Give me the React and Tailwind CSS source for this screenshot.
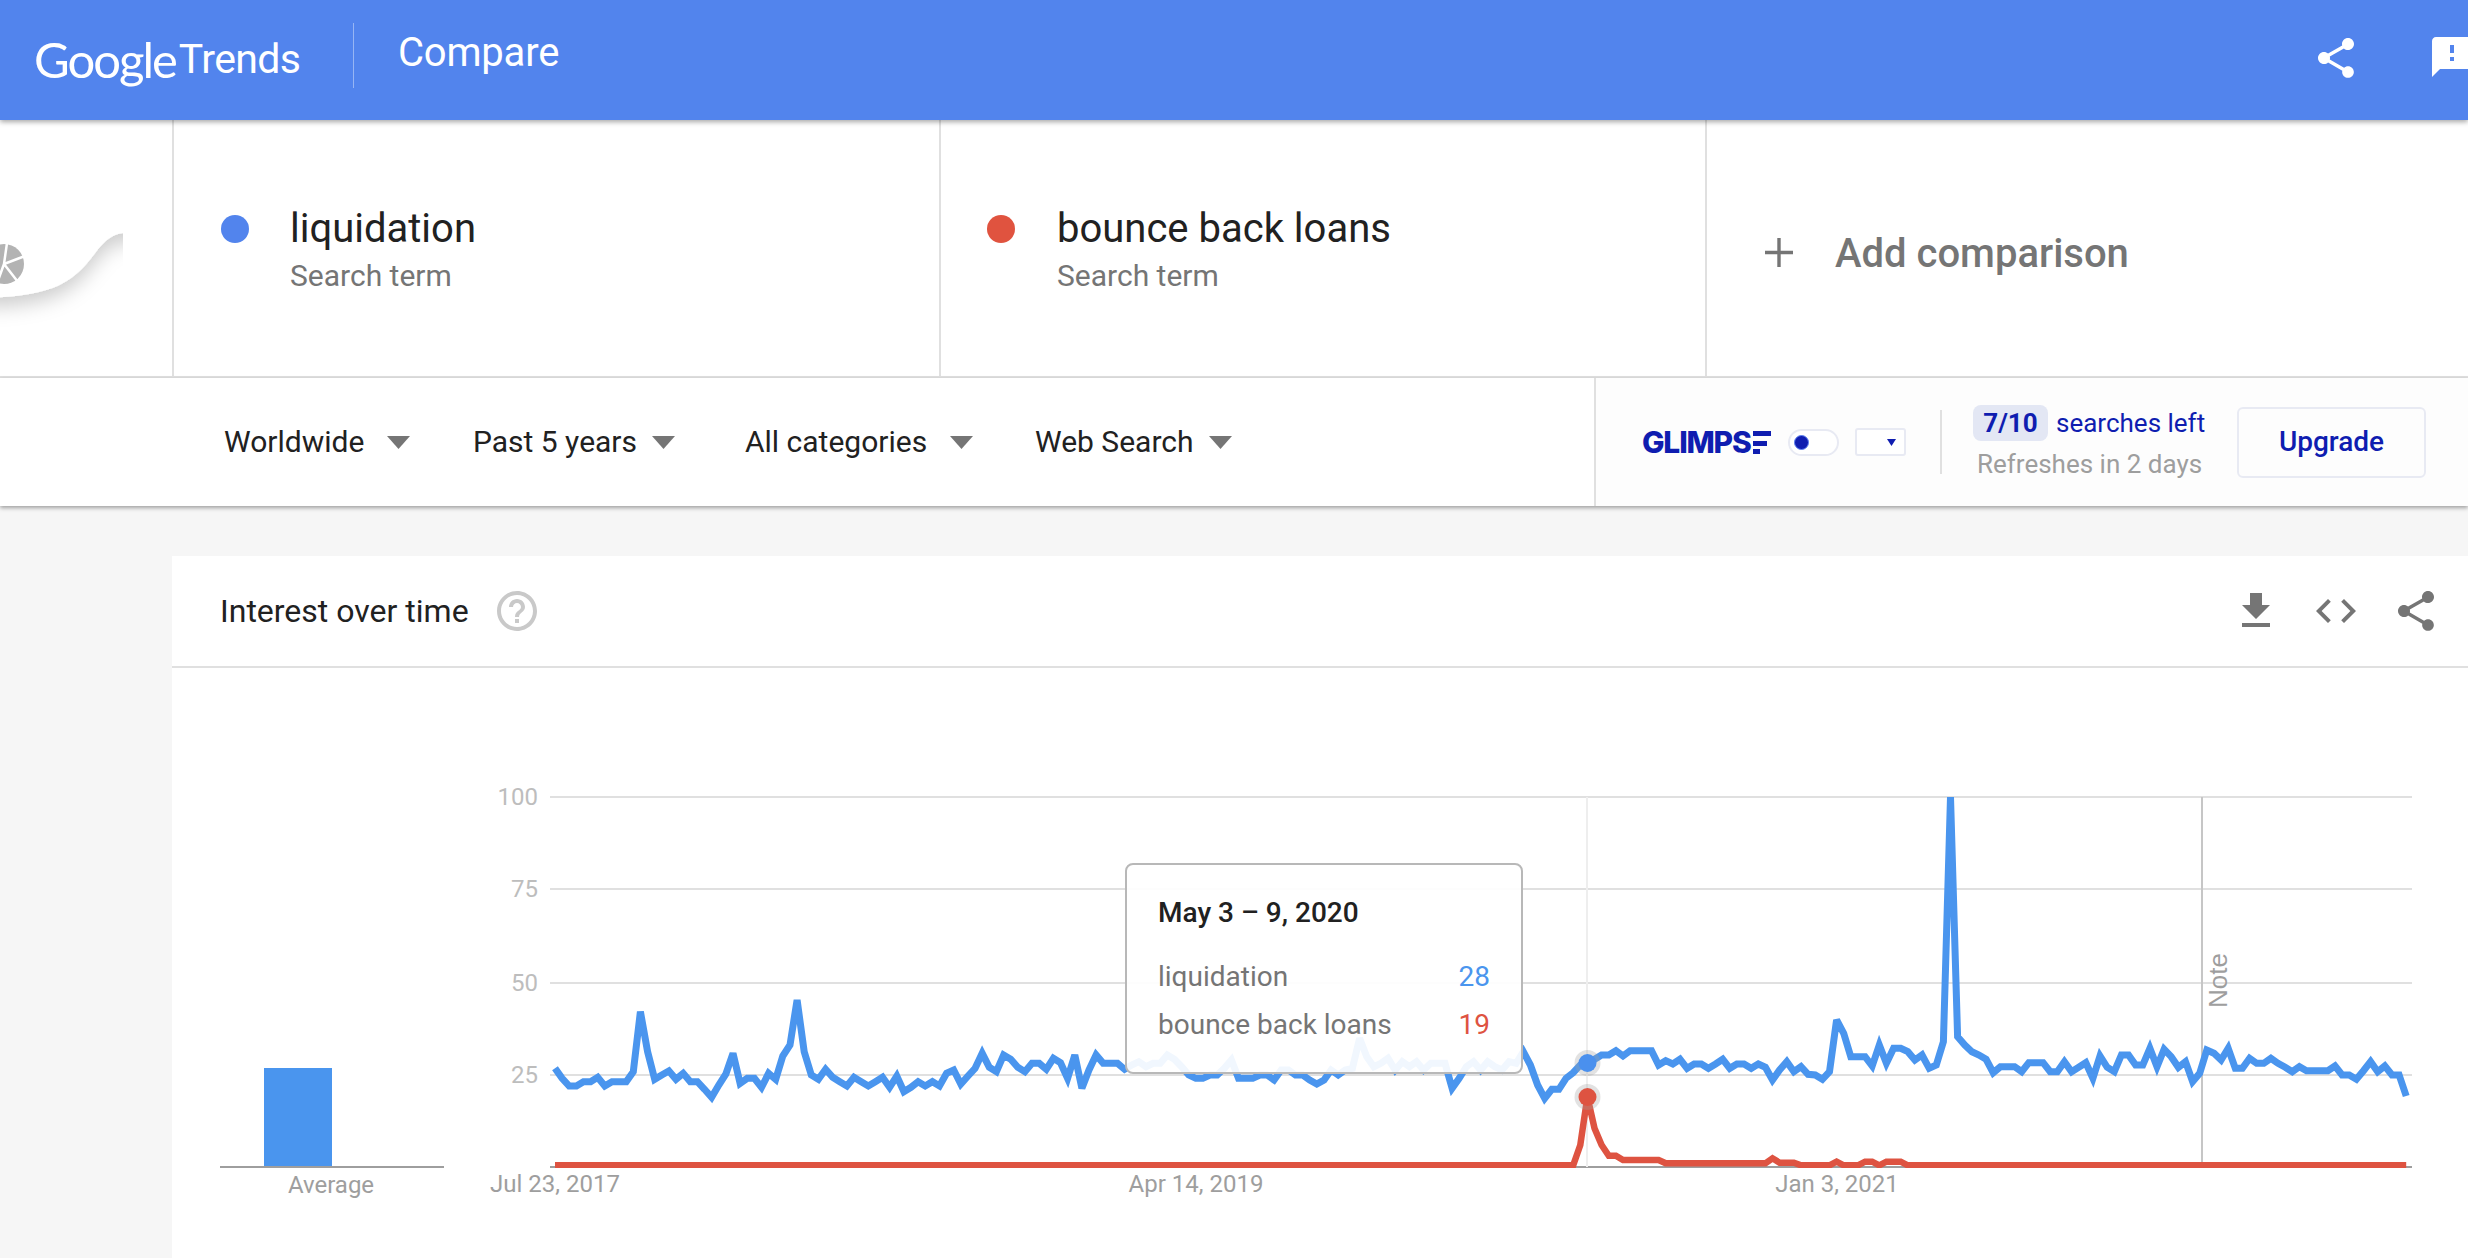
const A = [235,265,288,288,275,275,262,288,275,275,275,245,65,185,268,255,243,268,250,275,275,298,322,285,252,190,280,265,265,292,250,268,198,165,30,185,255,268,238,262,275,288,262,275,288,275,262,292,258,305,292,275,288,275,288,250,240,282,258,235,190,232,245,195,208,232,245];
const B = [130,130,148,115,128,175,105,205,150,105,130,130,130,148,135,125,140,130,130,105,118,140,165,175,175,165,165,145,120,175,175,175,165,165,180,150,150,165,165,180,192,180,150,165,150,145,55,110,140,130,115,150,125,140,125,150,130,130,130,205,175,140,125,150,125,140,150,125];
const C = [160,125,165,225,265,238,238,205,188,165,158,148,135,135,122,138,122,122,122,122,165,152,162,148,175,162,162,175,162,148,175,162,162,175,162,172,210,180,155,185,170,193,195,208,185,30,70,140,140,140,168,105,160,115,115,125,150,135,175,165,95,-639,80];
const D = [105,125,135,148,188,170,170,170,185,158,158,158,185,185,155,185,172,158,205,138,172,185,135,135,165,165,115,170,118,140,172,155,215,190,120,130,150,115,175,175,145,160,160,145,160,172,185,170,182,182,182,182,168,195,195,208,182,155,185,168,195,195,258];
const blueY = [...A.map((y) => 990 + y / 3), ...B.map((y) => 1020 + y / 3), ...C.map((y) => 1010 + y / 3), ...D.map((y) => 1010 + y / 3)];
const X = (k) => 555 + 7.12 * k;
const bluePts = blueY.map((y, k) => `${X(k).toFixed(1)},${y.toFixed(1)}`).join(" ");
const redTail = { 143: 466, 144: 405, 145: 260, 146: 355, 147: 405, 148: 437, 149: 437, 150: 450, 151: 450, 152: 450, 153: 450, 154: 450, 155: 450, 171: 445, 172: 458, 173: 458, 174: 458, 180: 455, 184: 455, 185: 455, 187: 455, 188: 455, 189: 455 };
const redPts = Array.from({ length: 261 }, (_, k) => {
  let z = 466;
  if (redTail[k] !== undefined) z = redTail[k];
  else if (k >= 156 && k <= 170) z = 460;
  return `${X(k).toFixed(1)},${(1010 + z / 3).toFixed(1)}`;
}).join(" ");

const SHARE = "M18 16.08c-.76 0-1.44.3-1.96.77L8.91 12.7c.05-.23.09-.46.09-.7s-.04-.47-.09-.7l7.05-4.11c.54.5 1.25.81 2.04.81 1.66 0 3-1.34 3-3s-1.34-3-3-3-3 1.34-3 3c0 .24.04.47.09.7L8.04 9.81C7.5 9.31 6.79 9 6 9c-1.66 0-3 1.34-3 3s1.34 3 3 3c.79 0 1.5-.31 2.04-.81l7.12 4.16c-.05.21-.08.43-.08.65 0 1.61 1.31 2.92 2.92 2.92 1.61 0 2.92-1.31 2.92-2.92s-1.31-2.92-2.92-2.92z";

function Mat({ d, className }) {
  return (
    <svg viewBox="0 0 24 24" className={"w-12 h-12 shrink-0 " + className} fill="currentColor">
      <path d={d} />
    </svg>
  );
}

function Tri({ className }) {
  return (
    <svg width="23" height="13" viewBox="0 0 23 13" className={"shrink-0 " + className}>
      <path d="M0 0h23L11.5 13z" fill="#757575" />
    </svg>
  );
}

function Term({ color, name, width, pad, gap }) {
  return (
    <div className={"h-full border-r-2 border-[#e0e0e0] pt-[85px] flex items-start shrink-0 " + width + " " + pad}>
      <div className="h-12 flex items-center">
        <div className={"w-7 h-7 rounded-full " + color} />
      </div>
      <div className={gap}>
        <div className="text-[40px] leading-[48px] text-[#212121]">{name}</div>
        <div className="text-[30px] leading-[36px] mt-[5px] text-[#757575]">Search term</div>
      </div>
    </div>
  );
}

export default function App() {
  return (
    <div className="w-[2468px] h-[1258px] overflow-hidden bg-[#f6f6f6] flex flex-col font-['Roboto',sans-serif]">
      <header className="h-[120px] shrink-0 bg-[#5284ed] relative z-20 flex items-start text-white shadow-[0_2px_5px_rgba(0,0,0,0.35)]">
        <div className="w-[353px] h-full pl-[34px] pt-[30px] flex items-start shrink-0 whitespace-nowrap">
          <span className="font-['Lato',sans-serif] text-[49px] leading-[58px] tracking-[-2px]">Google</span>
          <span className="text-[41px] leading-[58px] tracking-[-0.6px] ml-[3px]">Trends</span>
        </div>
        <div className="w-px h-[65px] mt-[23px] bg-white/40 shrink-0" />
        <div className="ml-[44px] mt-[29px] text-[40px] leading-[48px] font-normal tracking-[-0.2px]">Compare</div>
        <div className="ml-auto mr-[-8px] mt-[33px] flex items-start gap-[68px]">
          <Mat d={SHARE} className="mt-px" />
          <Mat d="M20 2H4c-1.1 0-1.99.9-1.99 2L2 22l4-4h14c1.1 0 2-.9 2-2V4c0-1.1-.9-2-2-2zm-7 12h-2v-2h2v2zm0-4h-2V6h2v4z" className="" />
        </div>
      </header>

      <section className="h-[258px] shrink-0 bg-white border-b-2 border-[#e0e0e0] flex">
        <div className="w-[174px] h-full shrink-0 border-r-2 border-[#e0e0e0]">
          <svg width="172" height="256" viewBox="0 120 172 256">
            <defs>
              <filter id="sw" x="-30%" y="-30%" width="160%" height="160%">
                <feDropShadow dx="0" dy="9" stdDeviation="10" floodColor="#000" floodOpacity="0.2" />
              </filter>
              <clipPath id="swc"><rect x="0" y="120" width="123" height="256" /></clipPath>
            </defs>
            <g clipPath="url(#swc)">
              <path d="M200 100V233H123C100 236 95 260 75 275C55 292 25 297 -20 298V100Z" fill="#fff" filter="url(#sw)" />
            </g>
            <circle cx="4" cy="264" r="20" fill="#b3b3b3" />
            <path d="M4 264L7 243M4 264L25 256M4 264L18 282M4 264L-4 286" stroke="#fff" strokeWidth="2.5" />
          </svg>
        </div>
        <Term color="bg-[#5284ed]" name="liquidation" width="w-[767px]" pad="pl-[47px]" gap="ml-[41px]" />
        <Term color="bg-[#e0533f]" name="bounce back loans" width="w-[766px]" pad="pl-[46px]" gap="ml-[42px]" />
        <div className="flex-1 flex items-center pl-[58px] pt-[8px] whitespace-nowrap">
          <svg width="28" height="29" viewBox="0 0 28 29" className="shrink-0">
            <path d="M12.3 0h3.4v12.8H28v3.4H15.7V29h-3.4V16.2H0v-3.4h12.300z" fill="#757575" />
          </svg>
          <span className="ml-[42px] mt-[4px] text-[40px] leading-[48px] font-medium text-[#757575]">Add comparison</span>
        </div>
      </section>

      <section className="h-[128px] shrink-0 bg-white relative z-10 flex shadow-[0_2px_4px_rgba(0,0,0,0.35)]">
        <div className="w-[1594px] shrink-0 flex items-center pl-[224px] text-[30px] leading-[36px] text-[#212121] whitespace-nowrap">
          <span className="w-[139px] shrink-0">Worldwide</span>
          <Tri className="ml-[24px]" />
          <span className="ml-[63px] w-[163px] shrink-0">Past 5 years</span>
          <Tri className="ml-[16px]" />
          <span className="ml-[70px] w-[181px] shrink-0">All categories</span>
          <Tri className="ml-[24px]" />
          <span className="ml-[62px] w-[158px] shrink-0">Web Search</span>
          <Tri className="ml-[16px]" />
        </div>
        <div className="flex-1 border-l-2 border-[#e0e0e0] bg-[#fdfdfd] flex items-center pl-[46px]">
          <div className="w-[129px] shrink-0 flex items-center">
            <span className="font-['Inter',sans-serif] font-extrabold text-[#0f1db0] text-[30px] leading-[32px] tracking-[-1.2px]">GLIMPS</span>
            <svg width="18" height="23" viewBox="0 0 18 23" className="ml-auto shrink-0">
              <path d="M0 0h18v5H0zM0 10h14v5H0zM0 18h7v5H0z" fill="#0f1db0" />
            </svg>
          </div>
          <div className="ml-[17px] w-[51px] h-[27px] rounded-full border-2 border-[#e8eaf3] bg-white flex items-center pl-[4px] shrink-0">
            <div className="w-[15px] h-[15px] rounded-full bg-[#0f1db0] border border-[#5b7ff0]" />
          </div>
          <div className="ml-[16px] w-[51px] h-[28px] rounded-[3px] border-2 border-[#e8eaf3] bg-white flex items-center justify-end pr-[8px] shrink-0">
            <svg width="9" height="7" viewBox="0 0 9 7"><path d="M0 0h9L4.500 7z" fill="#0f1db0" /></svg>
          </div>
          <div className="ml-[34px] w-[2px] h-[64px] bg-[#e0e0e0] shrink-0" />
          <div className="ml-[31px] w-[264px] shrink-0">
            <div className="flex items-center text-[26px] text-[#0f1db0]">
              <span className="w-[75px] h-[36px] rounded-[8px] bg-[#e3e7f4] font-bold flex items-center justify-center leading-[36px]">7/10</span>
              <span className="ml-[8px] leading-[36px]">searches left</span>
            </div>
            <div className="mt-[8px] ml-[4px] text-[26px] leading-[30px] text-[#9e9e9e]">Refreshes in 2 days</div>
          </div>
          <div className="w-[189px] h-[71px] rounded-[6px] border-2 border-[#e8eaf3] flex items-center justify-center text-[28px] font-medium text-[#0f1db0] shrink-0">Upgrade</div>
        </div>
      </section>

      <section className="flex-1 ml-[172px] mt-[50px] bg-white flex flex-col min-h-0">
        <div className="h-[112px] shrink-0 border-b-2 border-[#e0e0e0] flex items-center pl-[48px] pr-[28px]">
          <span className="text-[32px] leading-[36px] text-[#212121]">Interest over time</span>
          <Mat d="M11 18h2v-2h-2v2zm1-16C6.480 2 2 6.480 2 12s4.480 10 10 10 10-4.480 10-10S17.520 2 12 2zm0 18c-4.410 0-8-3.590-8-8s3.590-8 8-8 8 3.590 8 8-3.590 8-8 8zm0-14c-2.210 0-4 1.790-4 4h2c0-1.100.9-2 2-2s2 .9 2 2c0 2-3 1.750-3 5h2c0-2.250 3-2.500 3-5 0-2.210-1.790-4-4-4z" className="ml-[24px] text-[#c9c9c9]" />
          <div className="ml-auto flex gap-8 text-[#757575]">
            <Mat d="M19 9h-4V3H9v6H5l7 7 7-7zM5 18v2h14v-2H5z" />
            <Mat d="M9.400 16.600L4.800 12l4.600-4.600L8 6l-6 6 6 6 1.400-1.400zm5.200 0l4.600-4.600-4.600-4.600L16 6l6 6-6 6-1.400-1.400z" />
            <Mat d={SHARE} />
          </div>
        </div>
        <div className="flex-1 relative min-h-0">
          <svg width="2296" height="590" viewBox="172 668 2296 590" className="block font-['Roboto',sans-serif]">
            <defs>
              <clipPath id="plot"><rect x="550" y="796" width="1862" height="372" /></clipPath>
            </defs>
            {[797, 889, 983, 1075].map((y) => (
              <rect key={y} x="550" y={y - 1} width="1862" height="2" fill="#e0e0e0" />
            ))}
            <rect x="550" y="1166" width="1862" height="2" fill="#9e9e9e" />
            <rect x="1586" y="797" width="2" height="370" fill="#eeeeee" />
            <rect x="2201" y="797" width="2" height="370" fill="#c6c6c6" />
            <g fill="#bdbdbd" fontSize="24" textAnchor="end">
              <text x="538" y="805">100</text>
              <text x="538" y="897">75</text>
              <text x="538" y="991">50</text>
              <text x="538" y="1083">25</text>
            </g>
            <g fill="#9e9e9e" fontSize="24" textAnchor="middle">
              <text x="555" y="1192">Jul 23, 2017</text>
              <text x="1196" y="1192">Apr 14, 2019</text>
              <text x="1837" y="1192">Jan 3, 2021</text>
              <text x="331" y="1193">Average</text>
            </g>
            <text transform="translate(2227 1008) rotate(-90)" fontSize="26" fill="#9e9e9e" style={{ fontFamily: "'Liberation Sans',sans-serif" }}>Note</text>
            <rect x="264" y="1068" width="68" height="98" fill="#4a95ee" />
            <rect x="220" y="1166" width="224" height="2" fill="#9e9e9e" />
            <g clipPath="url(#plot)">
              <polyline points={bluePts} fill="none" stroke="#4a95ee" strokeWidth="7" strokeLinejoin="miter" strokeMiterlimit="3" />
              <polyline points={redPts} fill="none" stroke="#de5341" strokeWidth="6.500" strokeLinejoin="miter" strokeMiterlimit="3" />
            </g>
            <circle cx="1587.500" cy="1063" r="13" fill="#9e9e9e" opacity="0.3" />
            <circle cx="1587.500" cy="1063" r="9" fill="#4a90ee" />
            <circle cx="1587.500" cy="1097" r="13" fill="#9e9e9e" opacity="0.3" />
            <circle cx="1587.500" cy="1097" r="9" fill="#de5341" />
          </svg>
          <div className="absolute left-[953px] top-[195px] w-[398px] h-[211px] rounded-[8px] border-2 border-[#b8b8b8] bg-white/[0.92] pl-[31px] pr-[31px] pt-[32px] whitespace-nowrap">
            <div className="text-[28px] leading-[32px] font-medium text-[#212121]">May 3 – 9, 2020</div>
            <div className="mt-[32px] flex justify-between text-[28px] leading-[32px] text-[#757575]">
              <span>liquidation</span><span className="text-[#4a95ee]">28</span>
            </div>
            <div className="mt-[16px] flex justify-between text-[28px] leading-[32px] text-[#757575]">
              <span>bounce back loans</span><span className="text-[#de5341]">19</span>
            </div>
          </div>
        </div>
      </section>
    </div>
  );
}
